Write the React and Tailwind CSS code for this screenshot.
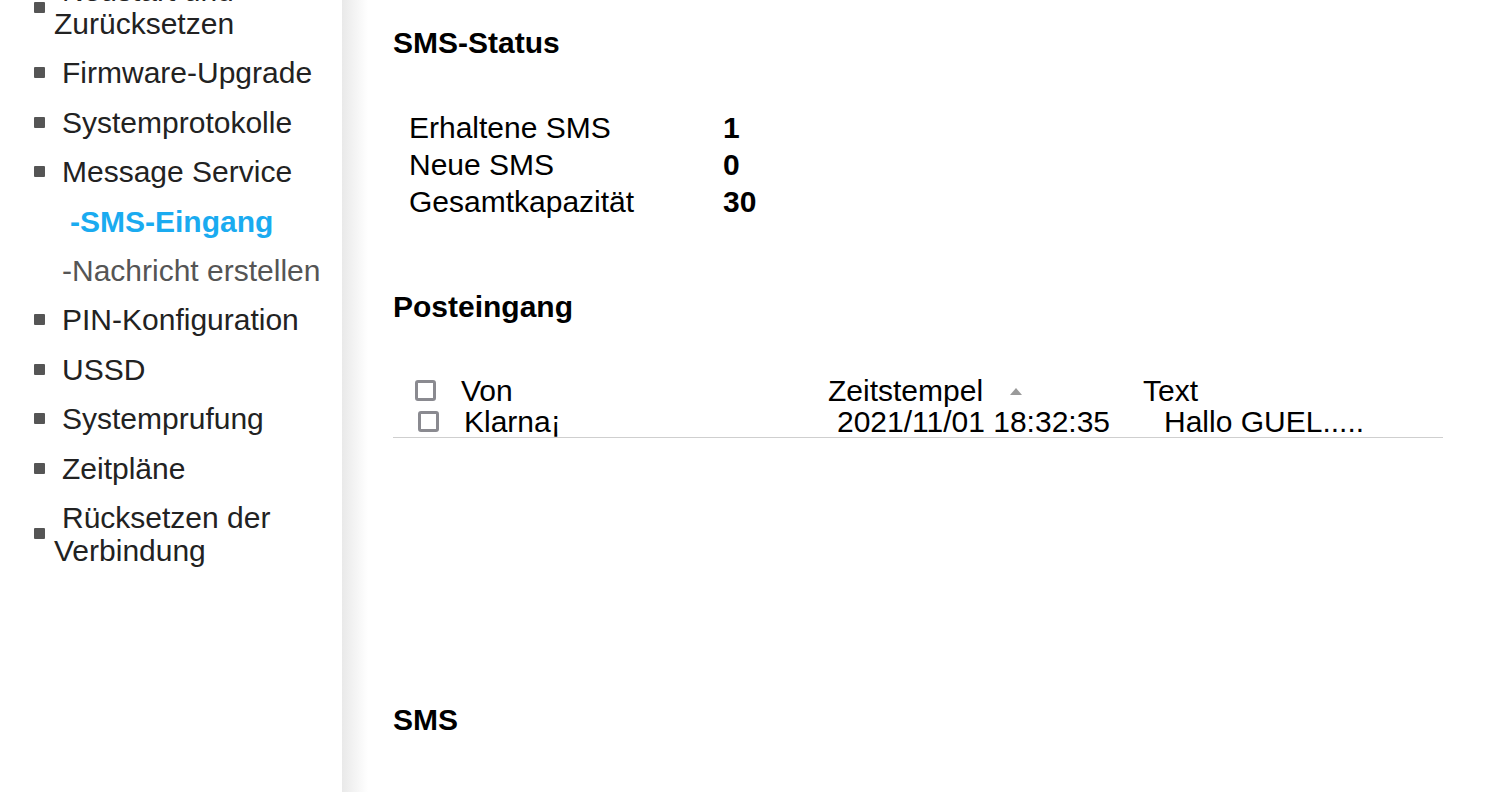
import React from "react";

const menu = [
  { label: "Neustart und Zurücksetzen", bullet: true },
  { label: "Firmware-Upgrade", bullet: true },
  { label: "Systemprotokolle", bullet: true },
  { label: "Message Service", bullet: true },
  { label: "-SMS-Eingang", sub: true, active: true },
  { label: "-Nachricht erstellen", sub: true },
  { label: "PIN-Konfiguration", bullet: true },
  { label: "USSD", bullet: true },
  { label: "Systemprufung", bullet: true },
  { label: "Zeitpläne", bullet: true },
  { label: "Rücksetzen der Verbindung", bullet: true },
];

const stats = [
  ["Erhaltene SMS", "1"],
  ["Neue SMS", "0"],
  ["Gesamtkapazität", "30"],
];

function Checkbox() {
  return <span className="block w-[21px] h-[21px] border-[3px] border-[#8a8a90] rounded-[3px] bg-white" />;
}

function SideItem({ item }) {
  if (item.sub) {
    return (
      <li className="pl-[54px]">
        <span
          className={
            item.active
              ? "block pl-[16px] font-bold text-[#1aabf0]"
              : "block pl-[8px] text-[#555555]"
          }
        >
          {item.label}
        </span>
      </li>
    );
  }
  return (
    <li className="flex items-center">
      <span className="w-[54px] shrink-0 flex">
        <span className="ml-[34px] w-[11px] h-[11px] bg-[#555555] rounded-[1px]" />
      </span>
      <span className="w-[270px] indent-[8px] text-[#222222]">{item.label}</span>
    </li>
  );
}

export default function App() {
  return (
    <div
      className="flex w-[1489px] h-[792px] overflow-hidden bg-white text-[30px] leading-[33px] text-black"
      style={{ fontFamily: '"Liberation Sans", Arial, sans-serif' }}
    >
      <aside className="w-[342px] shrink-0">
        <ul className="flex flex-col gap-[16.4px] mt-[-26px]">
          {menu.map((item) => (
            <SideItem key={item.label} item={item} />
          ))}
        </ul>
      </aside>
      <div className="w-[26px] shrink-0 bg-gradient-to-r from-[#e9e9e9] to-white" />
      <main className="flex-1 pl-[25px] pt-[26px]">
        <h2 className="font-bold">SMS-Status</h2>

        <div className="mt-[50px] pl-[16px]">
          {stats.map(([k, v]) => (
            <div key={k} className="flex h-[37px] items-center">
              <span className="w-[314px]">{k}</span>
              <span className="font-bold">{v}</span>
            </div>
          ))}
        </div>

        <h2 className="font-bold mt-[70px]">Posteingang</h2>

        <div className="mt-[51px] w-[1050px]">
          <div className="flex h-[32px] items-center">
            <div className="w-[68px] pl-[22px]">
              <Checkbox />
            </div>
            <div className="w-[367px]">Von</div>
            <div className="w-[315px] flex items-center">
              <span>Zeitstempel</span>
              <svg width="12" height="7" viewBox="0 0 12 7" className="ml-[27px] mt-[2px]">
                <polygon points="6,0 12,7 0,7" fill="#9a9a9a" />
              </svg>
            </div>
            <div>Text</div>
          </div>
          <div className="flex h-[32px] items-center border-b border-[#cfcfcf]">
            <div className="w-[71px] pl-[25px]">
              <Checkbox />
            </div>
            <div className="w-[373px]">Klarna¡</div>
            <div className="w-[327px]">2021/11/01 18:32:35</div>
            <div>Hallo GUEL.....</div>
          </div>
        </div>

        <h2 className="font-bold mt-[265px]">SMS</h2>
      </main>
    </div>
  );
}
